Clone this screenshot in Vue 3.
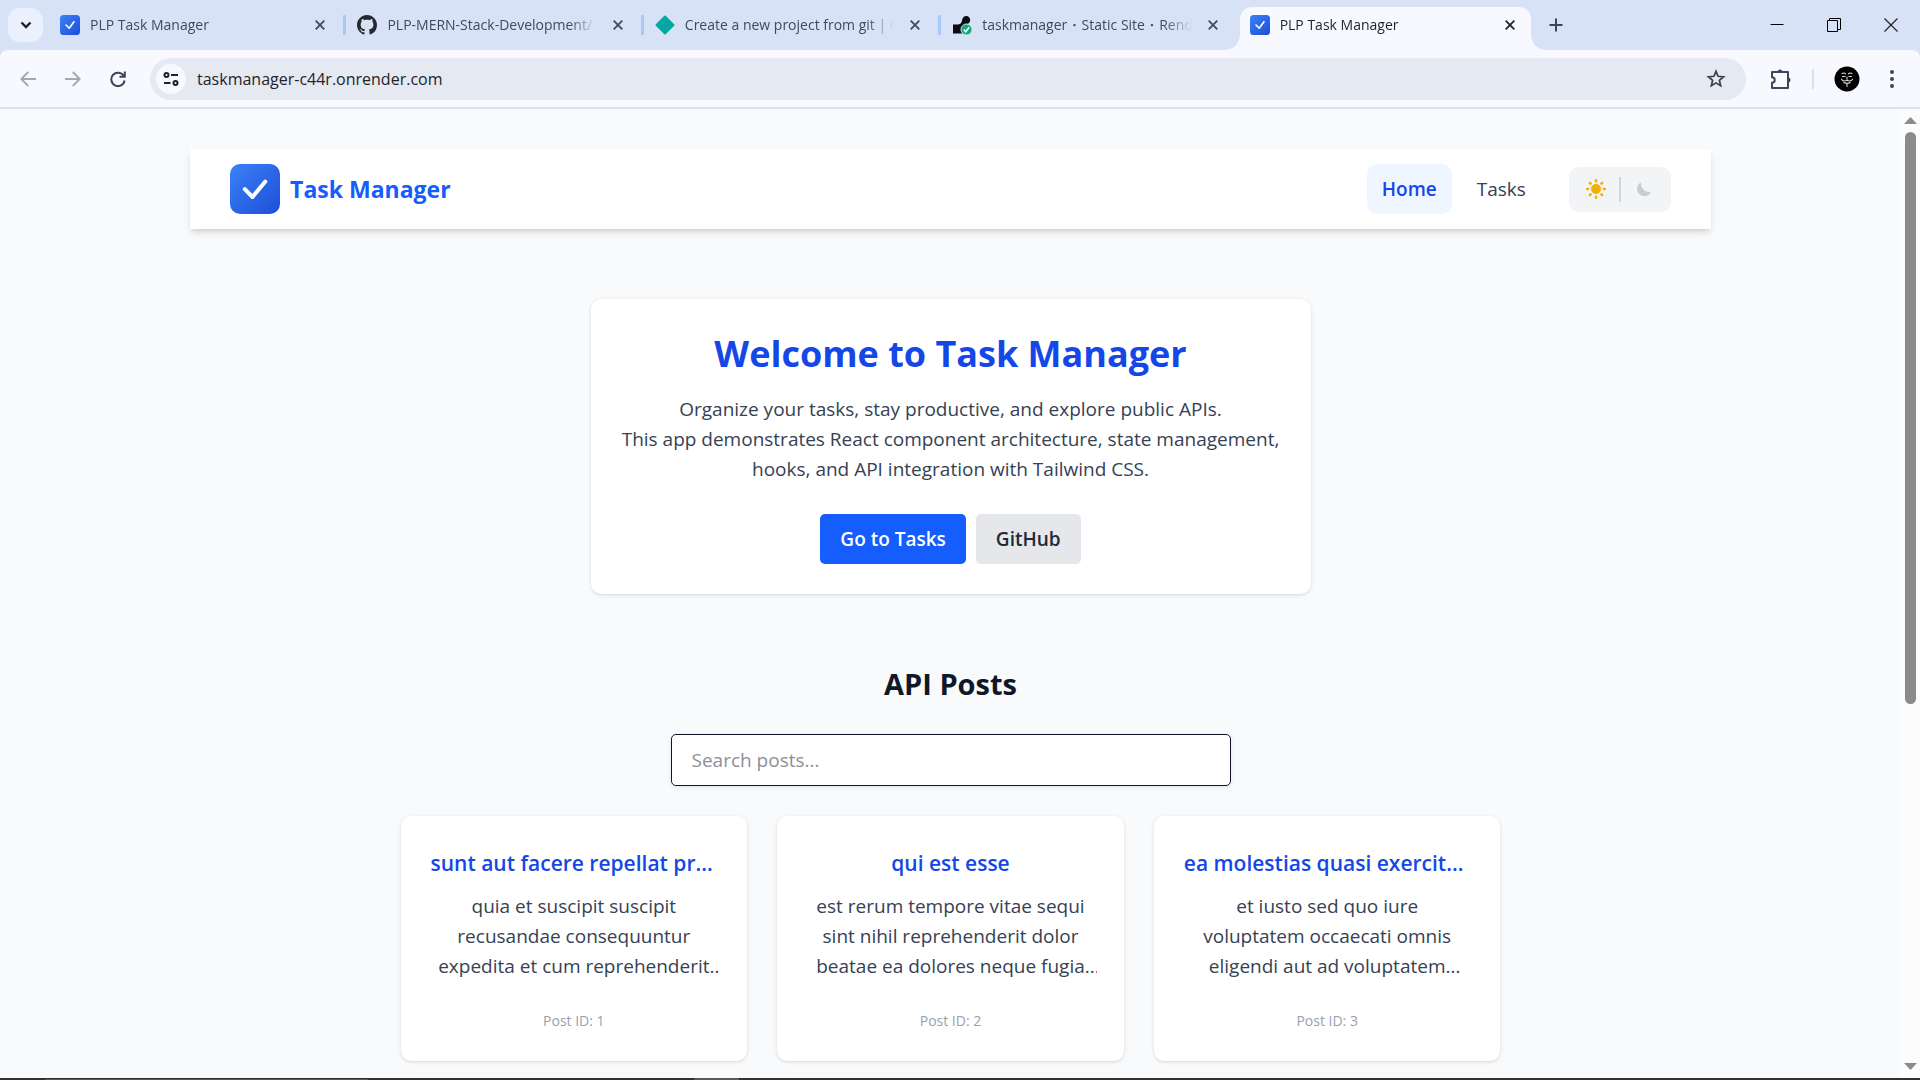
<script setup>
import { ref } from 'vue'

const tabs = [
  { icon: 'task', title: 'PLP Task Manager' },
  { icon: 'github', title: 'PLP-MERN-Stack-Development/' },
  { icon: 'diamond', title: 'Create a new project from git | C' },
  { icon: 'render', title: 'taskmanager ･ Static Site ･ Rend' },
  { icon: 'task', title: 'PLP Task Manager', active: true },
]

const address = ref('taskmanager-c44r.onrender.com')
const query = ref('')

const posts = [
  {
    id: 1,
    title: 'sunt aut facere repellat pr...',
    cut: true,
    lines: ['quia et suscipit suscipit', 'recusandae consequuntur', 'expedita et cum reprehenderit'],
  },
  {
    id: 2,
    title: 'qui est esse',
    cut: false,
    lines: ['est rerum tempore vitae sequi', 'sint nihil reprehenderit dolor', 'beatae ea dolores neque fugia'],
  },
  {
    id: 3,
    title: 'ea molestias quasi exercit...',
    cut: true,
    lines: ['et iusto sed quo iure', 'voluptatem occaecati omnis', 'eligendi aut ad voluptatem'],
  },
]
</script>

<template>
  <div class="window">
    <header class="tabstrip">
      <button class="tab-search" aria-label="Search tabs">
        <svg width="12" height="8" viewBox="0 0 12 8"><path d="M1.5 1.5 6 6l4.500-4.500" fill="none" stroke="#1f2328" stroke-width="2.400" /></svg>
      </button>
      <div class="tabs">
        <template v-for="(tab, i) in tabs" :key="i">
          <span v-if="i > 0" class="tab-sep" :class="{ blank: tab.active }"></span>
          <div class="tab" :class="{ active: tab.active }">
            <svg v-if="tab.icon === 'task'" class="favicon" viewBox="0 0 50 50">
              <defs>
                <linearGradient :id="'fav' + i" x1="0" y1="0" x2="1" y2="1">
                  <stop offset="0" stop-color="#3b82f6" /><stop offset="1" stop-color="#1d4ed8" />
                </linearGradient>
              </defs>
              <rect width="50" height="50" rx="9" :fill="`url(#fav${i})`" />
              <path d="M15 25l8 8 12-16" fill="none" stroke="#fff" stroke-width="4" stroke-linecap="round" stroke-linejoin="round" />
            </svg>
            <svg v-else-if="tab.icon === 'github'" class="favicon" viewBox="0 0 16 16">
              <path fill="#24292f" d="M8 0C3.58 0 0 3.58 0 8c0 3.540 2.290 6.530 5.470 7.590.4.070.550-.170.550-.380 0-.190-.010-.820-.010-1.490-2.010.370-2.530-.490-2.690-.940-.090-.230-.480-.940-.820-1.130-.280-.150-.680-.520-.010-.530.630-.010 1.080.580 1.230.820.720 1.210 1.870.870 2.330.660.070-.520.280-.870.510-1.070-1.780-.2-3.640-.890-3.640-3.950 0-.870.310-1.590.820-2.150-.080-.2-.360-1.020.080-2.120 0 0 .670-.210 2.200.820.640-.180 1.320-.270 2-.270s1.360.090 2 .270c1.530-1.040 2.200-.820 2.200-.820.440 1.100.160 1.920.080 2.120.510.560.820 1.270.820 2.150 0 3.070-1.870 3.750-3.650 3.950.290.250.540.730.540 1.480 0 1.070-.010 1.930-.010 2.200 0 .210.150.460.550.380A8.010 8.010 0 0 0 16 8c0-4.420-3.580-8-8-8z" />
            </svg>
            <svg v-else-if="tab.icon === 'diamond'" class="favicon" viewBox="0 0 20 20">
              <path d="M10 1.500 18.500 10 10 18.500 1.500 10z" fill="#05a8a0" stroke="#05a8a0" stroke-width="2" stroke-linejoin="round" />
            </svg>
            <svg v-else class="favicon" viewBox="0 0 20 20">
              <path d="M1 18.500V9.500h4.500c2.800 0 4-1.200 4.500-4C10.400 2.700 12 1 14.200 1c2.300 0 4 1.700 4 4 0 2.600-1.700 4.200-4.300 4.500-2.400.3-3.400 1.400-3.400 3.500v5.500z" fill="#0b0d10" />
              <circle cx="14.500" cy="14.500" r="5.500" fill="#12a77c" stroke="#d8e2f7" />
              <path d="m11.800 14.600 2 2.200 3.400-4.500" fill="none" stroke="#fff" stroke-width="1.600" />
            </svg>
            <span class="tab-title">{{ tab.title }}</span>
            <button class="tab-close" aria-label="Close tab">
              <svg width="10" height="10" viewBox="0 0 10 10"><path d="m.7.7 8.600 8.600M9.300.7.7 9.300" stroke="currentColor" stroke-width="1.800" /></svg>
            </button>
          </div>
        </template>
      </div>
      <button class="new-tab" aria-label="New tab">
        <svg width="14" height="14" viewBox="0 0 14 14"><path d="M7 .5v13M.5 7h13" stroke="#3c4659" stroke-width="2" /></svg>
      </button>
      <div class="controls">
        <button aria-label="Minimize"><svg width="14" height="14" viewBox="0 0 14 14"><path d="M.5 6.500h13" stroke="#000" /></svg></button>
        <button aria-label="Restore"><svg width="14" height="14" viewBox="0 0 14 14"><path d="M.5 2.500h10v11H.5zM2.500 2.500v-2h11v11h-3" fill="none" stroke="#000" /></svg></button>
        <button aria-label="Close"><svg width="14" height="14" viewBox="0 0 14 14"><path d="m.5.5 13 13m0-13-13 13" stroke="#222" stroke-width="1.200" /></svg></button>
      </div>
    </header>

    <div class="toolbar">
      <button class="tool" aria-label="Back">
        <svg width="16" height="16" viewBox="0 0 16 16"><path d="M16 8H1.500M8.200 1 1.300 8l6.900 7" fill="none" stroke="#a2a7b0" stroke-width="1.800" /></svg>
      </button>
      <button class="tool" aria-label="Forward">
        <svg width="16" height="16" viewBox="0 0 16 16"><path d="M0 8h14.500M7.800 1l6.900 7-6.900 7" fill="none" stroke="#a2a7b0" stroke-width="1.800" /></svg>
      </button>
      <button class="tool" aria-label="Reload">
        <svg width="16" height="16" viewBox="0 0 16 16"><path d="M13.800 5A6.700 6.700 0 1 0 14.600 9.500M14.800.5v5.300H9.500" fill="none" stroke="#3c4659" stroke-width="2" /></svg>
      </button>
      <div class="omnibox">
        <button class="site-info" aria-label="Site information">
          <svg width="16" height="14" viewBox="0 0 16 14" fill="none" stroke="#1f2328" stroke-width="2"><circle cx="3.500" cy="3" r="2" /><path d="M8 3h7M1 11h6.500" /><circle cx="12.500" cy="11" r="2" /></svg>
        </button>
        <input v-model="address" class="address" type="text" aria-label="Address" />
        <button class="bookmark" aria-label="Bookmark">
          <svg width="20" height="20" viewBox="0 0 20 20"><path d="m10 2.300 2.100 5 5.500.5-4.200 3.600 1.300 5.400-4.700-2.900-4.700 2.900 1.300-5.400-4.200-3.600 5.500-.5z" fill="none" stroke="#3c4043" stroke-width="1.700" /></svg>
        </button>
      </div>
      <button class="extensions" aria-label="Extensions">
        <svg width="22" height="22" viewBox="0 0 22 22"><path d="M2 4h16v16H2v-5.200c3.700-.3 3.700-5.300 0-5.600z" fill="none" stroke="#3c4659" stroke-width="2" stroke-linejoin="round" /><path d="M7.500 4a2.500 2.500 0 0 1 5 0zM18 9.500a2.500 2.500 0 0 1 0 5z" fill="#3c4659" /></svg>
      </button>
      <span class="tool-sep"></span>
      <button class="profile" aria-label="Profile">
        <svg width="26" height="26" viewBox="0 0 26 26"><circle cx="13" cy="13" r="12.500" fill="#000" /><g fill="none" stroke="#d8d8d8" stroke-width="1.100" stroke-linecap="round"><path d="M8 7.500c1.500-.8 2.800-.6 3.600.4M18 7.500c-1.500-.8-2.800-.6-3.600.4M8.500 10.500h2.600M14.900 10.500h2.600M7.500 13.200c1 1.800 3.300 2.300 5.500 1 2.200 1.300 4.500.8 5.500-1M9.800 16.500c2 1 4.400 1 6.400 0M13 11v2M13 18v2.500" /></g></svg>
      </button>
      <button class="menu" aria-label="Menu">
        <svg width="4" height="18" viewBox="0 0 4 18" fill="#3c4659"><circle cx="2" cy="2" r="2" /><circle cx="2" cy="9" r="2" /><circle cx="2" cy="16" r="2" /></svg>
      </button>
    </div>

    <div class="viewport">
      <div class="page">
        <nav class="nav">
          <a class="brand" href="#home">
            <svg width="50" height="50" viewBox="0 0 50 50">
              <defs>
                <linearGradient id="brand" x1="0" y1="0" x2="1" y2="1">
                  <stop offset="0" stop-color="#3b82f6" /><stop offset="1" stop-color="#1d4ed8" />
                </linearGradient>
              </defs>
              <rect width="50" height="50" rx="10" fill="url(#brand)" />
              <path d="M14.800 25.200 22.500 33 35.300 17.500" fill="none" stroke="#fff" stroke-width="4" stroke-linecap="round" stroke-linejoin="round" />
            </svg>
            <span>Task Manager</span>
          </a>
          <div class="links">
            <a class="link current" href="#home">Home</a>
            <a class="link" href="#tasks">Tasks</a>
            <button class="theme" aria-label="Toggle theme">
              <svg width="20" height="20" viewBox="0 0 20 20" stroke="#f0b100" stroke-width="2.500" stroke-linecap="round">
                <circle cx="10" cy="10" r="5" fill="#f0b100" stroke="none" />
                <path d="M10 1.200v1M10 17.800v1M1.200 10h1M17.800 10h1M3.900 3.900l.7.700M15.400 15.400l.7.700M3.900 16.100l.7-.7M15.400 4.600l.7-.7" />
              </svg>
              <span class="theme-sep"></span>
              <svg width="20" height="20" viewBox="0 0 20 20"><path d="M7 3.200A7.400 7.400 0 1 0 17 13.200 9 9 0 0 1 7 3.200z" fill="#c7ccd4" /></svg>
            </button>
          </div>
        </nav>

        <main class="main">
          <section class="hero">
            <h1>Welcome to Task Manager</h1>
            <p>
              Organize your tasks, stay productive, and explore public APIs.<br />
              This app demonstrates React component architecture, state management,<br />
              hooks, and API integration with Tailwind CSS.
            </p>
            <div class="actions">
              <a class="btn primary" href="#tasks">Go to Tasks</a>
              <a class="btn" href="#github">GitHub</a>
            </div>
          </section>

          <section class="posts">
            <h2>API Posts</h2>
            <input v-model="query" class="search" type="text" placeholder="Search posts..." aria-label="Search posts" />
            <div class="grid">
              <article v-for="post in posts" :key="post.id" class="card">
                <h3 :class="{ cut: post.cut }">{{ post.title }}</h3>
                <p class="body">
                  <span v-for="(line, n) in post.lines" :key="n" class="line">{{ line }}<span v-if="n === 2" class="dots">...</span></span>
                </p>
                <p class="meta">Post ID: {{ post.id }}</p>
              </article>
            </div>
          </section>
        </main>
      </div>

      <div class="scrollbar">
        <svg width="13" height="7" viewBox="0 0 13 7"><path d="M6.500 0 13 7H0z" fill="#8b8b8b" /></svg>
        <div class="track"><div class="thumb"></div></div>
        <svg width="13" height="7" viewBox="0 0 13 7"><path d="M0 0h13L6.500 7z" fill="#8b8b8b" /></svg>
      </div>
    </div>
    <div class="taskbar"><span class="task-search"></span><span class="task-item"></span></div>
  </div>
</template>

<style>
body {
  margin: 0;
  background: #f9fafc;
}
</style>

<style scoped>
* {
  box-sizing: border-box;
}
.window {
  display: flex;
  flex-direction: column;
  height: 100vh;
  overflow: hidden;
  font-family: "Open Sans", "Noto Sans", "Noto Sans CJK JP", sans-serif;
  font-size: 19px;
  line-height: 30px;
  color: #364153;
}
button {
  display: flex;
  align-items: center;
  justify-content: center;
  flex: none;
  padding: 0;
  border: 0;
  background: none;
  font: inherit;
  color: inherit;
}
svg {
  display: block;
  flex: none;
}
a {
  color: inherit;
  text-decoration: none;
}
h1,
h2,
h3,
p {
  margin: 0;
}

/* Tab strip */
.tabstrip {
  display: flex;
  flex: none;
  align-items: center;
  height: 50px;
  padding-left: 8px;
  background: #d8e2f7;
}
.tab-search {
  width: 35px;
  height: 34px;
  margin-right: 7px;
  border-radius: 12px;
  background: #eaf0fd;
}
.tabs {
  display: flex;
  flex: 0 1 1481px;
  align-items: center;
  align-self: stretch;
  min-width: 0;
}
.tab {
  display: flex;
  flex: 1 1 0;
  align-items: center;
  align-self: flex-end;
  height: 43px;
  min-width: 0;
  padding: 0 12px 7px 10px;
  font-size: 14px;
  line-height: 20px;
  color: #3e4a5e;
}
.tab.active {
  position: relative;
  border-radius: 12px 12px 0 0;
  background: #f8f9fe;
  color: #1f2328;
}
.tab.active::before,
.tab.active::after {
  content: "";
  position: absolute;
  bottom: 0;
  width: 14px;
  height: 14px;
}
.tab.active::before {
  right: 100%;
  background: radial-gradient(circle at 0 0, transparent 13px, #f8f9fe 14px);
}
.tab.active::after {
  left: 100%;
  background: radial-gradient(circle at 100% 0, transparent 13px, #f8f9fe 14px);
}
.favicon {
  width: 20px;
  height: 20px;
}
.tab-title {
  flex: 1;
  margin: 0 12px 0 10px;
  overflow: hidden;
  white-space: nowrap;
  mask-image: linear-gradient(to left, transparent, #000 28px);
}
.tab-close {
  width: 18px;
  height: 18px;
}
.tab-sep {
  flex: none;
  width: 3px;
  height: 20px;
  margin: 0 1px 0 2px;
  border-radius: 1px;
  background: #a8c7fa;
}
.tab-sep.blank {
  visibility: hidden;
}
.new-tab {
  width: 34px;
  height: 34px;
  margin-left: 8px;
}
.controls {
  display: flex;
  margin: 0 1px 0 auto;
}
.controls button {
  width: 57px;
  height: 48px;
}

/* Toolbar */
.toolbar {
  display: flex;
  flex: none;
  align-items: center;
  height: 59px;
  padding: 0 16px 0 5px;
  border-bottom: 2px solid #dfe1e8;
  border-radius: 8px 8px 0 0;
  background: #f8f9fe;
  box-shadow: 0 -8px 0 #d8e2f7;
}
.tool {
  width: 45px;
  height: 42px;
}
.omnibox {
  display: flex;
  flex: 1;
  align-items: center;
  height: 42px;
  margin-left: 10px;
  padding: 0 18px 0 6px;
  border-radius: 21px;
  background: #e5e9f2;
}
.site-info {
  width: 30px;
  height: 30px;
  border-radius: 15px;
  background: #f8f9fe;
}
.address {
  flex: 1;
  min-width: 0;
  margin-left: 11px;
  padding: 0;
  border: 0;
  outline: 0;
  background: none;
  font: inherit;
  font-size: 16px;
  line-height: 24px;
  color: #1f2328;
}
.bookmark {
  width: 24px;
  height: 24px;
}
.extensions {
  width: 34px;
  height: 34px;
  margin-left: 18px;
}
.tool-sep {
  width: 2px;
  height: 20px;
  margin-left: 14px;
  background: #d3e0fb;
}
.profile {
  margin-left: 20px;
}
.menu {
  width: 24px;
  height: 34px;
  margin-left: 20px;
}

/* Page area */
.viewport {
  display: flex;
  flex: 1;
  min-height: 0;
  background: #f9fafc;
}
.page {
  flex: 1;
  min-width: 0;
  padding: 40px 0;
  overflow: hidden;
}
.nav {
  display: flex;
  align-items: center;
  justify-content: space-between;
  width: 80%;
  height: 80px;
  margin: 0 auto;
  padding: 0 40px;
  background: #fff;
  box-shadow: 0 5px 8px -1px rgba(0, 0, 0, 0.1), 0 3px 5px -2px rgba(0, 0, 0, 0.1);
}
.brand {
  display: flex;
  align-items: center;
  gap: 10px;
  font-size: 23px;
  font-weight: 700;
  color: #155dfc;
}
.links {
  display: flex;
  align-items: center;
  gap: 10px;
}
.link {
  padding: 10px 15px;
  border-radius: 10px;
}
.link.current {
  background: #eff6ff;
  font-weight: 600;
  color: #1447e6;
}
.theme {
  gap: 13px;
  height: 45px;
  margin-left: 18px;
  padding: 0 17px;
  border-radius: 10px;
  background: #f3f4f6;
}
.theme-sep {
  width: 2px;
  height: 25px;
  background: #d1d5dc;
}
.main {
  display: flex;
  flex-direction: column;
  align-items: center;
  gap: 70px;
  padding-top: 70px;
  text-align: center;
}
.hero {
  width: 100%;
  max-width: 720px;
  padding: 30px;
  border-radius: 10px;
  background: #fff;
  box-shadow: 0 1px 4px rgba(0, 0, 0, 0.1), 0 1px 3px -1px rgba(0, 0, 0, 0.1);
}
h1 {
  font-size: 36px;
  line-height: 50px;
  font-weight: 700;
  color: #1447e6;
}
.hero p {
  margin: 15px 0 30px;
}
.actions {
  display: flex;
  justify-content: center;
  gap: 10px;
}
.btn {
  padding: 10px 20px;
  border-radius: 5px;
  background: #e5e7eb;
  font-weight: 600;
  color: #1e2939;
}
.btn.primary {
  background: #155dfc;
  color: #fff;
}
.posts {
  display: flex;
  flex-direction: column;
  align-items: center;
  gap: 30px;
  width: 100%;
  max-width: 1100px;
}
h2 {
  font-size: 29px;
  line-height: 40px;
  font-weight: 700;
  color: #101828;
}
.search {
  width: 100%;
  max-width: 560px;
  height: 52px;
  padding: 0 20px;
  border: 1px solid #101828;
  border-radius: 5px;
  outline: 0;
  background: #fff;
  box-shadow: 0 1px 4px rgba(0, 0, 0, 0.1);
  font: inherit;
  color: #101828;
}
.search::placeholder {
  color: #8c9097;
  opacity: 1;
}
.grid {
  display: grid;
  grid-template-columns: repeat(3, minmax(0, 1fr));
  gap: 30px;
  width: 100%;
}
.card {
  padding: 30px;
  border-radius: 10px;
  background: #fff;
  box-shadow: 0 1px 4px rgba(0, 0, 0, 0.1), 0 1px 3px -1px rgba(0, 0, 0, 0.1);
}
h3 {
  margin-bottom: 10px;
  overflow: hidden;
  font-size: 21px;
  line-height: 35px;
  font-weight: 600;
  white-space: nowrap;
  color: #1447e6;
}
h3.cut {
  text-align: left;
}
.body {
  margin: 0 -3px;
  overflow: hidden;
}
.line {
  display: block;
  white-space: nowrap;
}
.dots {
  display: inline-block;
  width: 0;
}
.meta {
  margin-top: 30px;
  font-size: 14px;
  line-height: 20px;
  color: #99a1af;
}

/* Scrollbar and desktop edge */
.scrollbar {
  display: flex;
  flex: none;
  flex-direction: column;
  align-items: center;
  gap: 8px;
  width: 19px;
  padding: 8px 0;
  background: #fcfcfc;
}
.track {
  flex: 1;
}
.thumb {
  width: 11px;
  height: 62%;
  border-radius: 6px;
  background: #8b8b8b;
}
.taskbar {
  display: flex;
  flex: none;
  align-items: flex-end;
  height: 2px;
  background: #333132;
}
.task-search {
  width: 323px;
  height: 1px;
  margin-left: 45px;
  background: #5c5a5b;
}
.task-item {
  width: 45px;
  height: 2px;
  margin-left: 326px;
  background: #5c5a5b;
}
</style>
